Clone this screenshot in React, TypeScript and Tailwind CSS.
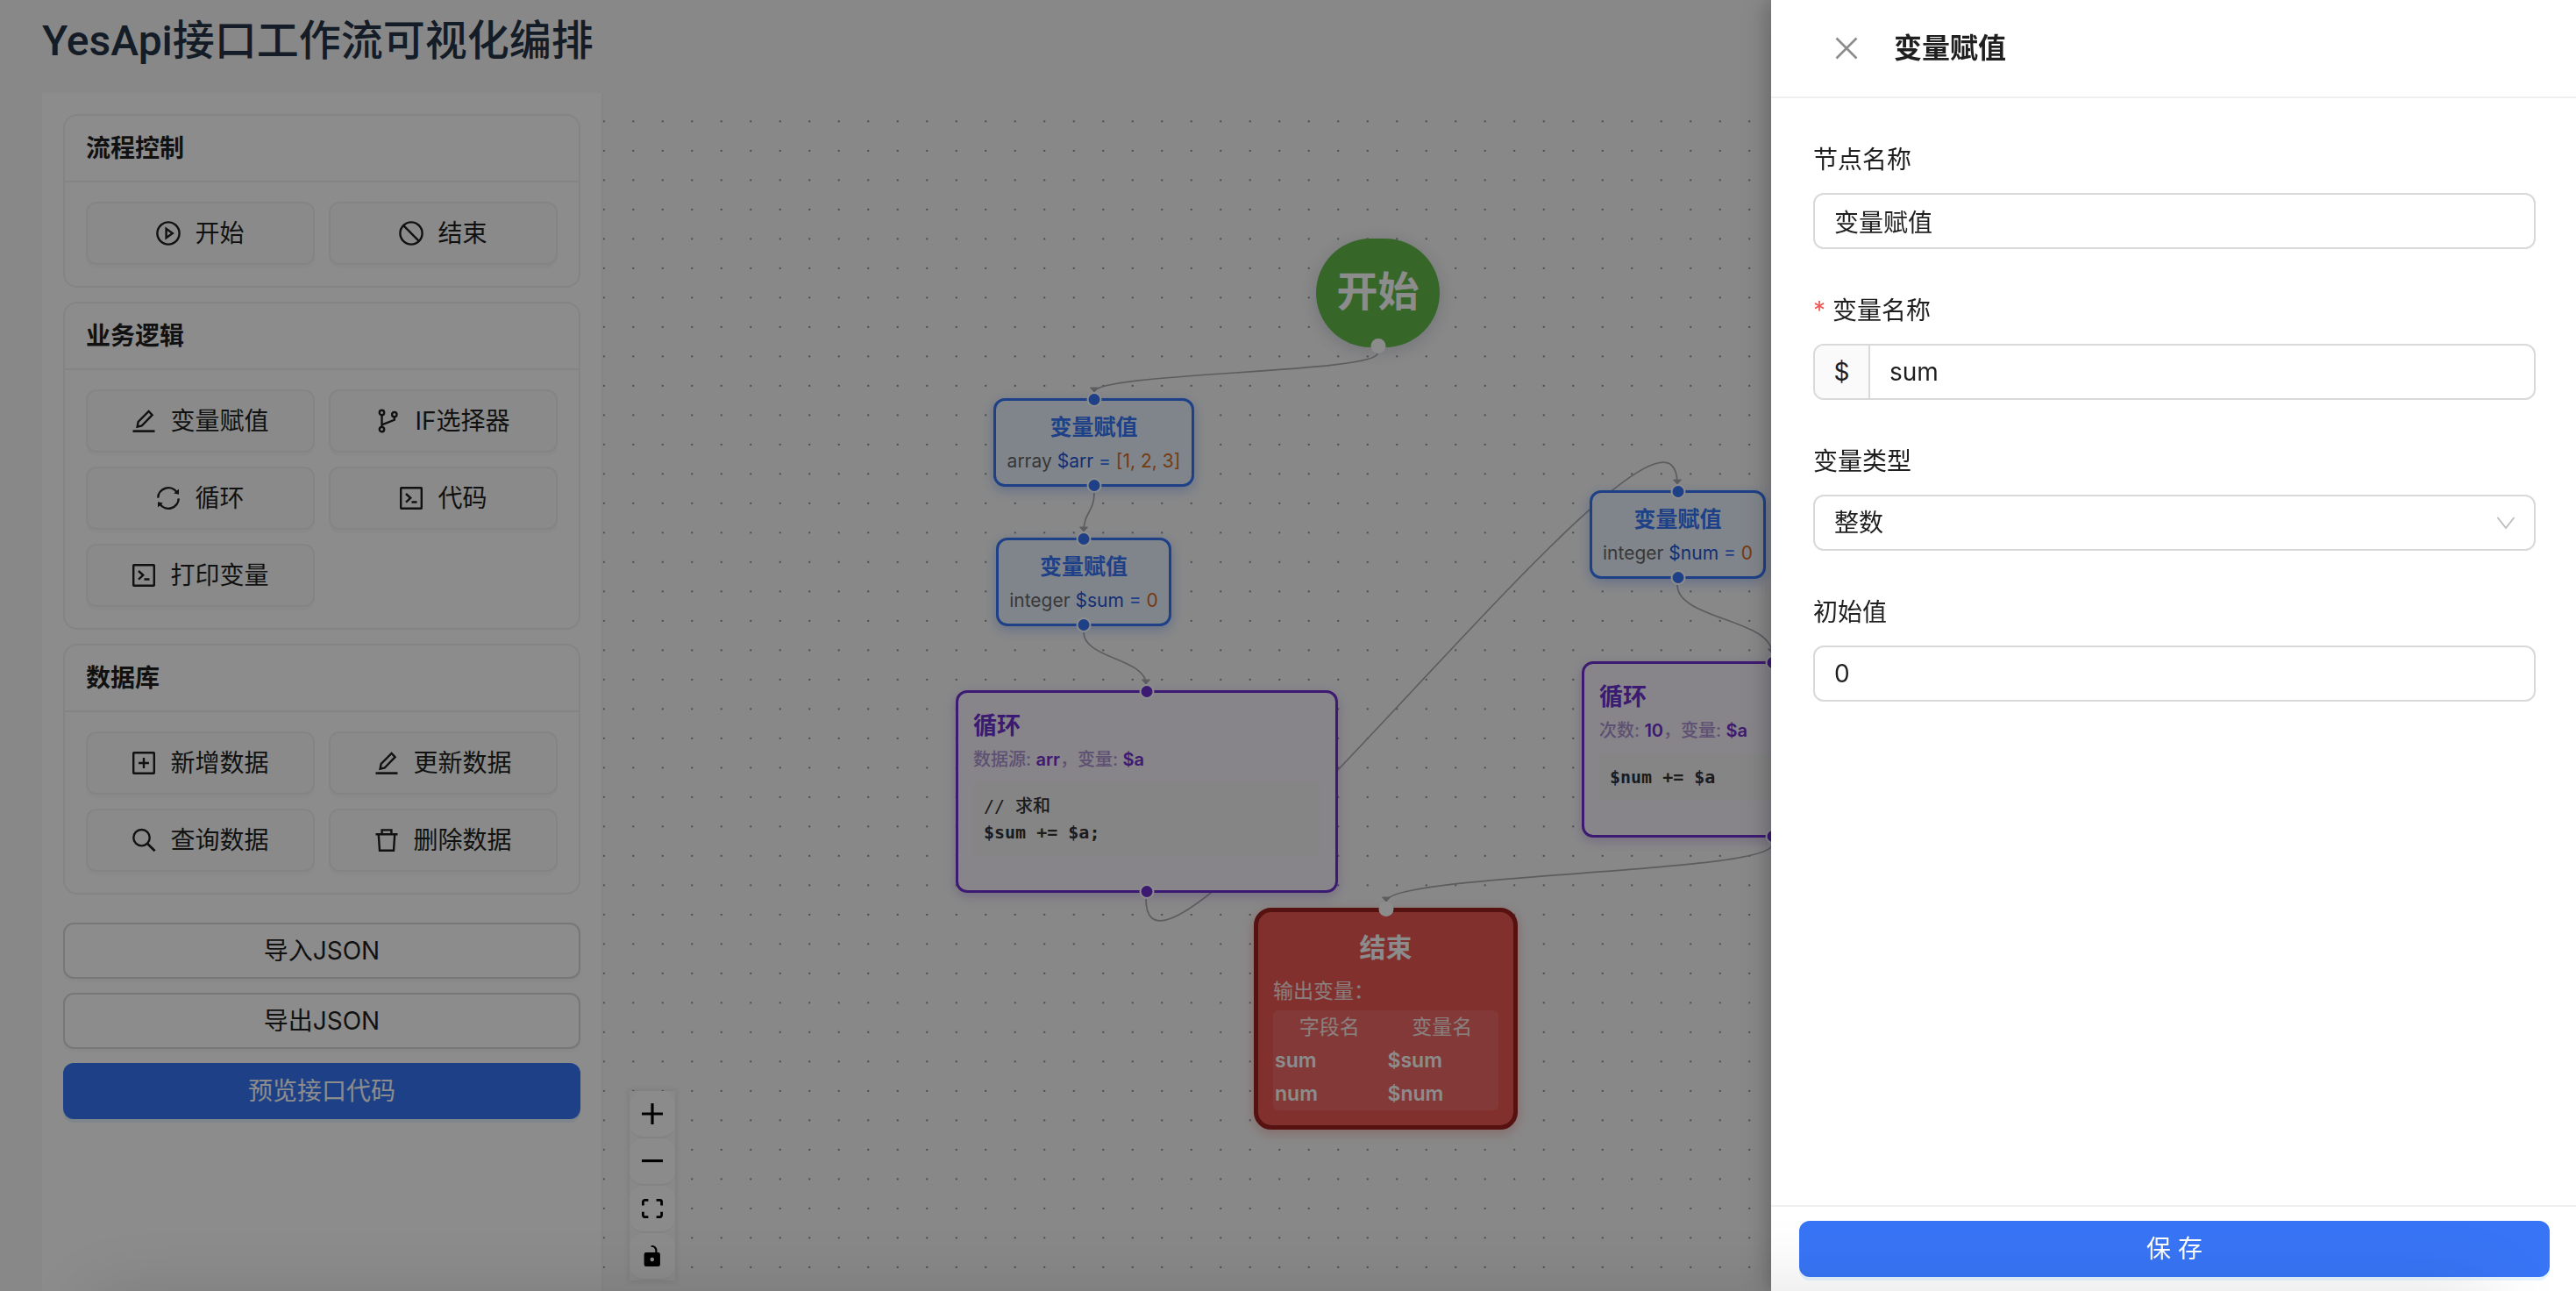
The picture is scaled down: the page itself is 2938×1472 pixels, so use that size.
import React from "react";

const FONT = "font-['Inter','Noto_Sans_CJK_SC',sans-serif]";

function AntIcon({ children }: { children: React.ReactNode }) {
  return (
    <svg viewBox="0 0 28 28" className="size-7 shrink-0" fill="none" stroke="currentColor" strokeWidth={2.4} aria-hidden="true">
      {children}
    </svg>
  );
}

const icons = {
  play: (
    <AntIcon>
      <circle cx="14" cy="14" r="12.6" />
      <path d="M11.6 8.8v10.4l7.2-5.2z" />
    </AntIcon>
  ),
  stop: (
    <AntIcon>
      <circle cx="14" cy="14" r="12.6" />
      <path d="M5.2 5.2l17.6 17.6" />
    </AntIcon>
  ),
  edit: (
    <AntIcon>
      <path d="M1.5 25.6h25" strokeWidth={2.6} />
      <path d="M6.6 20.6l1-5.6L19.6 3l4 4.2-11.9 12.3z" />
    </AntIcon>
  ),
  branch: (
    <AntIcon>
      <circle cx="6.5" cy="4.4" r="2.7" />
      <circle cx="6.5" cy="23.6" r="2.7" />
      <circle cx="20.8" cy="6.6" r="2.7" />
      <path d="M6.5 7.2v13.6M20.8 9.2v3.6l-14.3 5.6" />
    </AntIcon>
  ),
  sync: (
    <AntIcon>
      <path d="M2.2 13.6A11.8 11.8 0 0 1 23.6 7.2M25.8 14.4A11.8 11.8 0 0 1 4.4 20.8" />
      <path d="M26 3.500v6.200l-5.800-1.200zM2 24.500v-6.200l5.800 1.200z" fill="currentColor" stroke="none" />
    </AntIcon>
  ),
  code: (
    <AntIcon>
      <rect x="2.200" y="2.200" width="23.600" height="23.600" rx="0.600" />
      <path d="M8 9l5.200 4.800L8 18.600M14.500 18.500h6" />
    </AntIcon>
  ),
  plus: (
    <AntIcon>
      <rect x="2.200" y="2.200" width="23.600" height="23.600" rx="0.600" />
      <path d="M14 8v12M8 14h12" />
    </AntIcon>
  ),
  search: (
    <AntIcon>
      <circle cx="11.500" cy="11.200" r="9.200" />
      <path d="M18 17.800l8.600 8.400" strokeWidth={2.8} />
    </AntIcon>
  ),
  trash: (
    <AntIcon>
      <path d="M1.500 7.200h25M8.600 7V2.400h10.800V7M4.800 7.500l1.200 18.300h16L23.200 7.500" />
    </AntIcon>
  ),
};

type IconName = keyof typeof icons;

const groups: { title: string; items: { icon: IconName; label: string }[] }[] = [
  {
    title: "流程控制",
    items: [
      { icon: "play", label: "开始" },
      { icon: "stop", label: "结束" },
    ],
  },
  {
    title: "业务逻辑",
    items: [
      { icon: "edit", label: "变量赋值" },
      { icon: "branch", label: "IF选择器" },
      { icon: "sync", label: "循环" },
      { icon: "code", label: "代码" },
      { icon: "code", label: "打印变量" },
    ],
  },
  {
    title: "数据库",
    items: [
      { icon: "plus", label: "新增数据" },
      { icon: "edit", label: "更新数据" },
      { icon: "search", label: "查询数据" },
      { icon: "trash", label: "删除数据" },
    ],
  },
];

function Sidebar() {
  return (
    <aside className="flex w-[640px] shrink-0 flex-col border-r-2 border-[#f3f3f3] bg-white px-6 pt-6">
      <div className="flex flex-col gap-4">
        {groups.map((g) => (
          <section key={g.title} className="rounded-2xl border-2 border-[#f0f0f0]">
            <h2 className="-mb-0.5 flex h-[76px] items-center border-b-2 border-[#f0f0f0] px-6 text-[28px] font-semibold">{g.title}</h2>
            <div className="grid grid-cols-2 gap-4 p-6">
              {g.items.map((it) => (
                <button
                  key={it.label}
                  type="button"
                  className="flex h-[72px] items-center justify-center gap-4 rounded-xl border-2 border-[#f0f0f0] bg-[#f9fcfa] text-[28px] shadow-[0_4px_0_rgba(0,0,0,0.02)]"
                >
                  {icons[it.icon]}
                  <span>{it.label}</span>
                </button>
              ))}
            </div>
          </section>
        ))}
      </div>
      <div className="mt-8 flex flex-col gap-4">
        <button type="button" className="h-16 rounded-xl border-2 border-[#d9d9d9] text-[28px] shadow-[0_4px_0_rgba(0,0,0,0.02)]">导入JSON</button>
        <button type="button" className="h-16 rounded-xl border-2 border-[#d9d9d9] text-[28px] shadow-[0_4px_0_rgba(0,0,0,0.02)]">导出JSON</button>
        <button type="button" className="h-16 rounded-xl bg-[#3875f6] text-[28px] text-white shadow-[0_4px_0_rgba(5,145,255,0.1)]">预览接口代码</button>
      </div>
    </aside>
  );
}

const handleStyles = {
  blueTop: "-top-[10px] border-2 border-white bg-[#3875f6]",
  blueBottom: "-bottom-[10px] border-2 border-white bg-[#3875f6]",
  purpleTop: "-top-[10px] border-2 border-white bg-[#6f31cf]",
  purpleBottom: "-bottom-[10px] border-2 border-white bg-[#6f31cf]",
  whiteTop: "-top-3 bg-white",
  whiteBottom: "-bottom-[7px] bg-white",
};

function Handle({ kind }: { kind: keyof typeof handleStyles }) {
  return <span className={`absolute left-1/2 size-[17px] -translate-x-1/2 rounded-full ${handleStyles[kind]}`} />;
}

function AssignNode({ place, type, name, value }: { place: string; type: string; name: string; value: string }) {
  return (
    <div className={`absolute flex h-[101px] flex-col items-center justify-center rounded-[13px] border-[3px] border-[#3875f6] bg-[#eaf3fe] shadow-[0_4px_14px_rgba(56,117,246,0.35)] ${place}`}>
      <Handle kind="blueTop" />
      <div className="text-[25px] leading-[42px] font-semibold text-[#3875f6]">变量赋值</div>
      <div className="text-[21px] leading-9 whitespace-nowrap text-[#3875f6]">
        <span className="text-[#666]">{type}</span> <span className="text-[#2554d4]">{name}</span> = <span className="text-[#d46b21]">{value}</span>
      </div>
      <Handle kind="blueBottom" />
    </div>
  );
}

function LoopNode({ place, kind, source, comment, code }: { place: string; kind: string; source: string; comment?: string; code: string }) {
  return (
    <div className={`absolute w-[436px] rounded-[13px] border-[3px] border-[#6f31cf] bg-[#f6f0fb] px-[17px] pt-[17px] pb-[39px] shadow-[0_4px_14px_rgba(111,49,207,0.25)] ${place}`}>
      <Handle kind="purpleTop" />
      <div className="text-[27px] leading-[42px] font-semibold text-[#6f31cf]">循环</div>
      <div className="text-[20px] leading-[34px] font-medium text-[#ab92cf]">
        {kind}: <b className="font-semibold text-[#6f31cf]">{source}</b>，变量: <b className="font-semibold text-[#6f31cf]">$a</b>
      </div>
      <pre className="mt-[9px] rounded-md bg-[#f3f2f3] p-3 font-['DejaVu_Sans_Mono','Noto_Sans_CJK_SC',monospace] text-[20px] leading-[30px] text-[#333]">
        {comment ? <span className="block font-medium">{comment}</span> : null}
        <code className="block font-['DejaVu_Sans_Mono',monospace] font-semibold">{code}</code>
      </pre>
      <Handle kind="purpleBottom" />
    </div>
  );
}

const edges = [
  { d: "M883 297C883 319 560 319 560 341", tip: [560, 341] },
  { d: "M560 456C560 478 548 478 548 500", tip: [548, 500] },
  { d: "M548 615C548 645 619 645 619 674", tip: [619, 674] },
  { d: "M619 919C619 1095 1225 270 1225 446", tip: [1225, 446] },
  { d: "M1225 561C1225 600 1333 600 1333 639", tip: [1333, 639] },
  { d: "M1333 857C1333 890 893 890 893 922", tip: [893, 922] },
];

const controlIcons = [
  { label: "放大", box: "0 0 32 32", d: "M32 18.133H18.133V32h-4.266V18.133H0v-4.266h13.867V0h4.266v13.867H32z" },
  { label: "缩小", box: "0 0 32 5", d: "M0 0h32v4.2H0z" },
  {
    label: "适应画布",
    box: "0 0 32 30",
    d: "M3.692 4.63c0-.53.4-.938.939-.938h5.215V0H4.708C2.13 0 0 2.054 0 4.63v5.216h3.692V4.631zM27.354 0h-5.2v3.692h5.17c.53 0 .984.4.984.939v5.215H32V4.631A4.624 4.624 0 0027.354 0zm.954 24.83c0 .532-.4.94-.939.94h-5.215v3.768h5.215c2.577 0 4.631-2.13 4.631-4.707v-5.139h-3.692v5.139zm-23.677.94c-.531 0-.939-.4-.939-.94v-5.138H0v5.139c0 2.577 2.13 4.707 4.708 4.707h5.138V25.77H4.631z",
  },
  {
    label: "锁定",
    box: "0 0 25 32",
    d: "M21.333 10.667H19.81V7.619C19.81 3.429 16.38 0 12.19 0c-4.114 1.828-1.37 2.133.305 2.438 1.676.305 4.42 2.59 4.42 5.181v3.048H3.047A3.056 3.056 0 000 13.714v15.238A3.056 3.056 0 003.048 32h18.285a3.056 3.056 0 003.048-3.048V13.714a3.056 3.056 0 00-3.048-3.047zM12.19 24.533a3.056 3.056 0 01-3.047-3.047 3.056 3.056 0 013.047-3.048 3.056 3.056 0 013.048 3.048 3.056 3.056 0 01-3.048 3.047z",
  },
];

function Canvas() {
  return (
    <main className="relative min-w-0 flex-1 overflow-hidden">
      <svg className="absolute inset-0 size-full" aria-hidden="true">
        <pattern id="dots" x="-16" y="15.6" width="33.5" height="33.5" patternUnits="userSpaceOnUse">
          <circle cx="16.75" cy="16.75" r="1.1" fill="#70707a" />
        </pattern>
        <rect width="100%" height="100%" fill="url(#dots)" />
        {edges.map((e) => (
          <g key={e.d}>
            <path d={e.d} fill="none" stroke="#a9a9ad" strokeWidth={1.7} />
            <path d={`M${e.tip[0] - 4.5} ${e.tip[1] - 5}h9l-4.5 5z`} fill="#a9a9ad" stroke="#a9a9ad" strokeLinejoin="round" />
          </g>
        ))}
      </svg>

      <div className="absolute top-[166px] left-[813px] flex h-[124px] w-[141px] items-center justify-center rounded-full bg-[#65bb4c] pb-1 text-[47px] font-semibold text-white shadow-[0_4px_20px_rgba(60,70,120,0.2)]">
        开始
        <Handle kind="whiteBottom" />
      </div>

      <AssignNode place="top-[348px] left-[445px] w-[229px]" type="array" name="$arr" value="[1, 2, 3]" />
      <AssignNode place="top-[507px] left-[448px] w-[200px]" type="integer" name="$sum" value="0" />
      <AssignNode place="top-[453px] left-[1125px] w-[201px]" type="integer" name="$num" value="0" />
      <LoopNode place="top-[681px] left-[402px]" kind="数据源" source="arr" comment="// 求和" code="$sum += $a;" />
      <LoopNode place="top-[648px] left-[1116px]" kind="次数" source="10" code="$num += $a" />

      <div className="absolute top-[929px] left-[742px] w-[301px] rounded-[20px] border-[5px] border-[#9b2220] bg-[#ec5853] px-[17px] py-[17px] text-[23px] text-white shadow-[0_4px_14px_rgba(236,88,83,0.35)]">
        <Handle kind="whiteTop" />
        <div className="text-center text-[30px] leading-[46px] font-semibold">结束</div>
        <div className="mt-[9px] leading-9 text-white/85">输出变量：</div>
        <table className="mt-1 w-full table-fixed rounded-md bg-white/10 leading-[34px]">
          <thead>
            <tr>
              <th className="p-0.5 text-center font-normal text-white/85">字段名</th>
              <th className="p-0.5 text-center font-normal text-white/85">变量名</th>
            </tr>
          </thead>
          <tbody className="font-semibold text-white">
            <tr>
              <td className="p-0.5">sum</td>
              <td className="p-0.5">$sum</td>
            </tr>
            <tr>
              <td className="p-0.5">num</td>
              <td className="p-0.5">$num</td>
            </tr>
          </tbody>
        </table>
      </div>

      <div className="absolute bottom-3 left-[30px] flex w-[52px] flex-col bg-[#f8f8f8] shadow-[0_0_6px_2px_rgba(0,0,0,0.08)]">
        {controlIcons.map((c) => (
          <button key={c.label} type="button" aria-label={c.label} className="flex h-[54px] items-center justify-center rounded-2xl border-b-2 border-[#eee] bg-[#fefefe]">
            <svg viewBox={c.box} className="max-h-6 w-6 fill-black" aria-hidden="true">
              <path d={c.d} />
            </svg>
          </button>
        ))}
      </div>
    </main>
  );
}

const fieldBox = "h-16 w-full rounded-xl border-2 border-[#d9d9d9] bg-white px-[22px] text-[28px] text-[#1f1f1f] outline-none";

function Field({ id, label, required, children }: { id: string; label: string; required?: boolean; children: React.ReactNode }) {
  return (
    <div className="flex flex-col gap-4">
      <label htmlFor={id} className="flex h-11 items-center text-[28px]">
        {required ? <span className="mr-2 text-[#ec5b56]">*</span> : null}
        {label}
      </label>
      {children}
    </div>
  );
}

function Drawer() {
  return (
    <div role="dialog" aria-label="变量赋值" className="fixed inset-y-0 right-0 flex w-[918px] flex-col bg-white shadow-[-12px_0_32px_rgba(0,0,0,0.1),-6px_0_16px_rgba(10,25,45,0.15)]">
      <header className="flex h-28 shrink-0 items-center border-b-2 border-[#f0f0f0] px-[68px]">
        <button type="button" aria-label="关闭" className="mr-9 text-[#8c8c8c]">
          <svg viewBox="0 0 36 36" className="size-9" fill="none" stroke="currentColor" strokeWidth={2.6} aria-hidden="true">
            <path d="M6.5 6.5l23 23M29.5 6.5l-23 23" />
          </svg>
        </button>
        <h2 className="text-[32px] font-semibold">变量赋值</h2>
      </header>
      <form id="node-form" className="flex flex-1 flex-col gap-12 py-12 pr-[46px] pl-12">
        <Field id="node-name" label="节点名称">
          <input id="node-name" defaultValue="变量赋值" className={fieldBox} />
        </Field>
        <Field id="var-name" label="变量名称" required>
          <div className="flex h-16 overflow-hidden rounded-xl border-2 border-[#d9d9d9]">
            <span className="flex w-[63px] items-center justify-center border-r-2 border-[#d9d9d9] bg-[#fafafa] text-[28px]">$</span>
            <input id="var-name" defaultValue="sum" className="min-w-0 flex-1 px-[22px] text-[28px] outline-none" />
          </div>
        </Field>
        <Field id="var-type" label="变量类型">
          <div className="relative">
            <select id="var-type" defaultValue="integer" className={`${fieldBox} appearance-none`}>
              <option value="integer">整数</option>
              <option value="array">数组</option>
            </select>
            <svg viewBox="0 0 24 24" className="pointer-events-none absolute top-5 right-[22px] size-6 text-[#bfbfbf]" fill="none" stroke="currentColor" strokeWidth={2} aria-hidden="true">
              <path d="M2.500 6l9.500 12 9.500-12" />
            </svg>
          </div>
        </Field>
        <Field id="init-value" label="初始值">
          <input id="init-value" defaultValue="0" className={fieldBox} />
        </Field>
      </form>
      <footer className="shrink-0 border-t-2 border-[#f0f0f0] py-4 pr-[30px] pl-8">
        <button type="submit" form="node-form" className="h-16 w-full rounded-xl bg-[#3875f6] text-[28px] text-white shadow-[0_4px_0_rgba(5,145,255,0.1)]">保 存</button>
      </footer>
    </div>
  );
}

export default function App() {
  return (
    <div className={`${FONT} flex h-screen flex-col overflow-hidden bg-[#f8f8f8] pl-12 text-[#1f1f1f]`}>
      <h1 className="flex h-[106px] shrink-0 items-center pb-3 font-['Roboto','Noto_Sans_CJK_SC',sans-serif] text-[48px] font-medium text-[#253647]">YesApi接口工作流可视化编排</h1>
      <div className="flex min-h-0 flex-1">
        <Sidebar />
        <Canvas />
      </div>
      <div className="fixed inset-0 bg-black/45" />
      <Drawer />
      <div className="pointer-events-none fixed inset-x-24 top-full h-40 shadow-[0_0_90px_rgba(0,0,0,0.12)]" />
    </div>
  );
}
